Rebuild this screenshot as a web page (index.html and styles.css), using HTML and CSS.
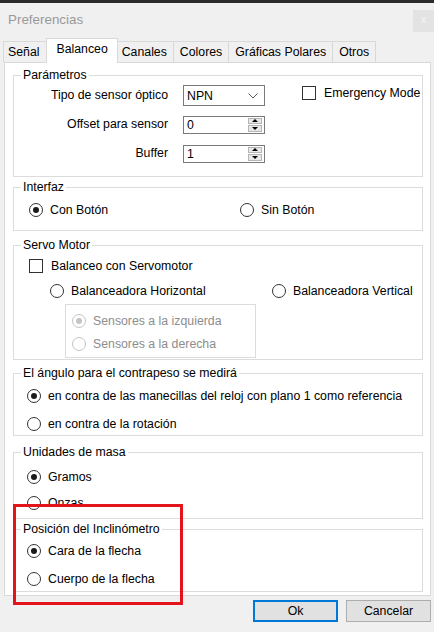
FILE: index.html
```html
<!DOCTYPE html>
<html lang="es">
<head>
  <meta charset="UTF-8">
  <meta name="viewport" content="width=device-width, initial-scale=1.0">
  <title>Preferencias</title>
  <link rel="stylesheet" href="styles.css">
</head>
<body>
  <div class="dialog">
    <div class="topbar"></div>
    <div class="titlebar">
      <span class="title">Preferencias</span>
      <span class="close">x</span>
    </div>

    <div class="tabs">
      <span class="tab">Señal</span>
      <span class="tab active">Balanceo</span>
      <span class="tab">Canales</span>
      <span class="tab">Colores</span>
      <span class="tab">Gráficas Polares</span>
      <span class="tab">Otros</span>
    </div>

    <div class="page">
      <!-- Parametros -->
      <div class="group params">
        <div class="legend">Parámetros</div>
        <div class="param-grid">
          <span class="param-label">Tipo de sensor óptico</span>
          <div class="combo">
            <span>NPN</span>
            <svg width="10" height="6" viewBox="0 0 10 6"><path d="M0.5 0.5 L5 5 L9.5 0.5" fill="none" stroke="#555" stroke-width="1"/></svg>
          </div>
          <div class="check emergency"><span class="box"></span>Emergency Mode</div>

          <span class="param-label">Offset para sensor</span>
          <div class="spin">
            <span>0</span>
            <div class="spin-btns"><span class="up"></span><span class="down"></span></div>
          </div>
          <span></span>

          <span class="param-label">Buffer</span>
          <div class="spin">
            <span>1</span>
            <div class="spin-btns"><span class="up"></span><span class="down"></span></div>
          </div>
          <span></span>
        </div>
      </div>

      <!-- Interfaz -->
      <div class="group interfaz">
        <div class="legend">Interfaz</div>
        <div class="two-cols">
          <div class="radio checked"><span class="dot"></span>Con Botón</div>
          <div class="radio"><span class="dot"></span>Sin Botón</div>
        </div>
      </div>

      <!-- Servo -->
      <div class="group servo">
        <div class="legend">Servo Motor</div>
        <div class="check servo-check"><span class="box"></span>Balanceo con Servomotor</div>
        <div class="servo-row">
          <div class="radio"><span class="dot"></span>Balanceadora Horizontal</div>
          <div class="radio"><span class="dot"></span>Balanceadora Vertical</div>
        </div>
        <div class="subgroup">
          <div class="radio disabled checked"><span class="dot"></span>Sensores a la izquierda</div>
          <div class="radio disabled"><span class="dot"></span>Sensores a la derecha</div>
        </div>
      </div>

      <!-- Angulo -->
      <div class="group angle">
        <div class="legend">El ángulo para el contrapeso se medirá</div>
        <div class="radio-list">
          <div class="radio checked"><span class="dot"></span>en contra de las manecillas del reloj con plano 1 como referencia</div>
          <div class="radio"><span class="dot"></span>en contra de la rotación</div>
        </div>
      </div>

      <!-- Unidades -->
      <div class="group units">
        <div class="legend">Unidades de masa</div>
        <div class="radio-list">
          <div class="radio checked"><span class="dot"></span>Gramos</div>
          <div class="radio"><span class="dot"></span>Onzas</div>
        </div>
      </div>

      <!-- Inclinometro -->
      <div class="group incl">
        <div class="legend">Posición del Inclinómetro</div>
        <div class="radio-list">
          <div class="radio checked"><span class="dot"></span>Cara de la flecha</div>
          <div class="radio"><span class="dot"></span>Cuerpo de la flecha</div>
        </div>
      </div>
    </div>

    <div class="actions">
      <button class="btn btn-default">Ok</button>
      <button class="btn">Cancelar</button>
    </div>

    <div class="highlight"></div>
  </div>
</body>
</html>
```

FILE: styles.css
```css
body {
  margin: 0;
  background-color: #f0f0f0;
  font-family: "Liberation Sans", Arial, sans-serif;
  font-size: 12.3px;
  color: #000;
}

.dialog {
  position: relative;
  width: 434px;
  height: 632px;
  overflow: hidden;
}

.topbar {
  height: 3px;
  background-color: #2b2b2b;
}

/* title */
.titlebar {
  display: flex;
  justify-content: space-between;
  align-items: flex-start;
  height: 35px;
}
.title {
  margin: 10px 0 0 8px;
  line-height: 14px;
  font-size: 13.4px;
  color: #9a9a9a;
}
.close {
  margin-top: 7px;
  width: 21px;
  height: 22px;
  line-height: 20px;
  text-align: center;
  background-color: #e3e3e3;
  color: #f6f6f6;
  font-size: 10px;
}

/* tabs */
.tabs {
  display: flex;
  align-items: flex-end;
  height: 24px;
  padding-left: 3px;
}
.tab {
  height: 21px;
  line-height: 20px;
  padding: 0 6px;
  border: 1px solid #d9d9d9;
  border-bottom: none;
  border-left: none;
  box-sizing: border-box;
  background-color: #f0f0f0;
}
.tab:first-child {
  border-left: 1px solid #d9d9d9;
  padding: 0 8px 0 4px;
}
.tab.active {
  position: relative;
  z-index: 1;
  height: 25px;
  line-height: 20px;
  margin: 0 -2px -1px -2px;
  padding: 0 9px;
  border-left: 1px solid #d9d9d9;
  background-color: #fff;
}

/* page */
.page {
  margin: 0 3px 0 4px;
  height: 534px;
  box-sizing: border-box;
  border: 1px solid #d9d9d9;
  background-color: #fff;
  padding: 12px 0 0 8px;
}

.group {
  width: 410px;
  box-sizing: border-box;
  border: 1px solid #dcdcdc;
}
.legend {
  width: fit-content;
  margin: -8px 0 0 7px;
  padding: 0 2px;
  line-height: 14px;
  background-color: #fff;
}

.params { height: 102px; }
.interfaz { height: 44px; margin-top: 10px; }
.servo { height: 115px; margin-top: 14px; }
.angle { height: 63px; margin-top: 13px; }
.units { height: 67px; margin-top: 16px; }
.incl { height: 63px; margin-top: 10px; }

/* parametros */
.param-grid {
  display: grid;
  grid-template-columns: 154px 82px auto;
  grid-auto-rows: 21px;
  column-gap: 15px;
  row-gap: 8px;
  padding-top: 3px;
}
.param-label {
  text-align: right;
  line-height: 21px;
}
.combo {
  display: flex;
  justify-content: space-between;
  align-items: center;
  border: 1px solid #7a7a7a;
  box-sizing: border-box;
  padding: 0 6px 0 3px;
  background-color: #fff;
}
.spin {
  align-self: center;
  display: flex;
  justify-content: space-between;
  align-items: center;
  height: 18px;
  border: 1px solid #7a7a7a;
  box-sizing: border-box;
  padding-left: 3px;
  background-color: #fff;
}
.spin-btns {
  display: flex;
  flex-direction: column;
  gap: 1px;
  width: 14px;
  height: 14px;
  margin-right: 2px;
}
.spin-btns span {
  flex: 1;
  display: flex;
  align-items: center;
  justify-content: center;
  border: 1px solid #b5b5b5;
  background-color: #e8e8e8;
}
.spin-btns .up::after {
  content: "";
  border-left: 3px solid transparent;
  border-right: 3px solid transparent;
  border-bottom: 3px solid #000;
}
.spin-btns .down::after {
  content: "";
  border-left: 3px solid transparent;
  border-right: 3px solid transparent;
  border-top: 3px solid #000;
}

/* checks and radios */
.check, .radio {
  display: flex;
  align-items: center;
  height: 20px;
  white-space: nowrap;
}
.check { gap: 8px; }
.radio { gap: 7px; }
.box {
  width: 14px;
  height: 14px;
  box-sizing: border-box;
  border: 1px solid #333;
  background-color: #fff;
}
.dot {
  display: flex;
  align-items: center;
  justify-content: center;
  width: 14px;
  height: 14px;
  box-sizing: border-box;
  border: 1px solid #333;
  border-radius: 50%;
  background-color: #fff;
}
.radio.checked .dot::after {
  content: "";
  width: 6px;
  height: 6px;
  border-radius: 50%;
  background-color: #1a1a1a;
}
.radio.disabled { color: #8d8d8d; }
.radio.disabled .dot { border-color: #c4c4c4; }
.radio.disabled.checked .dot::after { background-color: #c4c4c4; }

.emergency {
  align-self: start;
  height: 14px;
  margin: 1px 0 0 22px;
}

.two-cols {
  display: grid;
  grid-template-columns: 211px auto;
  padding: 6px 0 0 15px;
}

.servo-check {
  margin: 4px 0 0 15px;
}
.servo-row {
  display: grid;
  grid-template-columns: 222px auto;
  margin: 5px 0 0 36px;
}
.subgroup {
  width: 191px;
  height: 54px;
  box-sizing: border-box;
  margin: 3px 0 0 51px;
  border: 1px solid #dcdcdc;
  padding: 6px 0 0 6px;
  display: flex;
  flex-direction: column;
  gap: 3px;
}

.radio-list {
  display: flex;
  flex-direction: column;
  padding-left: 13px;
}
.angle .radio-list { padding-top: 6px; gap: 8px; }
.units .radio-list { padding-top: 8px; gap: 6px; }
.incl .radio-list { padding-top: 5px; gap: 8px; }

/* buttons */
.actions {
  display: flex;
  justify-content: flex-end;
  gap: 8px;
  margin: 4px 3px 0 0;
}
.btn {
  width: 85px;
  height: 22px;
  box-sizing: border-box;
  border: 1px solid #adadad;
  background-color: #e1e1e1;
  font-family: "Liberation Sans", Arial, sans-serif;
  font-size: 12.3px;
  color: #000;
  padding: 0;
}
.btn-default {
  border: 2px solid #0078d7;
}

/* red marker drawn over the dialog */
.highlight {
  position: absolute;
  left: 13px;
  top: 504px;
  width: 170px;
  height: 101px;
  box-sizing: border-box;
  border: 3px solid #e3141b;
}
```
